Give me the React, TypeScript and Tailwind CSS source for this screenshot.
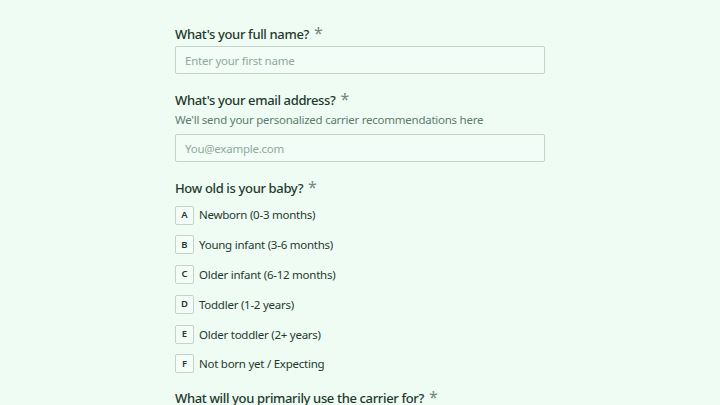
import React from "react";

const Label = ({ children }: { children: React.ReactNode }) => (
  <div className="flex items-start text-[13px] font-medium leading-[20px] tracking-[-0.35px] text-[#1d3a2c]">
    <span>{children}</span>
    <span className="ml-[5px] mt-[1px] text-[16px] font-normal leading-[16px] tracking-normal text-[#6f8a7c]">*</span>
  </div>
);

const options = [
  ["A", "Newborn (0-3 months)"],
  ["B", "Young infant (3-6 months)"],
  ["C", "Older infant (6-12 months)"],
  ["D", "Toddler (1-2 years)"],
  ["E", "Older toddler (2+ years)"],
  ["F", "Not born yet / Expecting"],
];

export default function App() {
  return (
    <div
      className="h-[405px] w-full overflow-hidden bg-[#effcf4]"
      style={{ fontFamily: '"Noto Sans", sans-serif' }}
    >
      <div className="mx-auto flex w-[370px] flex-col pt-[24px]">
        <Label>What's your full name?</Label>
        <input
          className="mt-[2px] h-[28px] w-full rounded-[2px] border border-[#c3d3ca] bg-[#f2fdf7] px-[9px] text-[11.5px] tracking-[-0.25px] text-[#1d3a2c] placeholder-[#8fa99a] outline-none"
          placeholder="Enter your first name"
        />
        <div className="mt-[16px]">
          <Label>What's your email address?</Label>
        </div>
        <div className="mt-[1px] text-[11.5px] leading-[18px] tracking-[-0.25px] text-[#5f7b6c]">
          We'll send your personalized carrier recommendations here
        </div>
        <input
          className="mt-[5px] h-[28px] w-full rounded-[2px] border border-[#c3d3ca] bg-[#f2fdf7] px-[9px] text-[11.5px] tracking-[-0.25px] text-[#1d3a2c] placeholder-[#8fa99a] outline-none"
          placeholder="You@example.com"
        />
        <div className="mt-[16px]">
          <Label>How old is your baby?</Label>
        </div>
        <div className="mt-[8px] flex flex-col gap-[11.8px]">
          {options.map(([k, t]) => (
            <div key={k} className="flex h-[18px] items-center">
              <div className="flex h-[19px] w-[19px] items-center justify-center rounded-[2px] border border-[#c3d3ca] bg-[#f4fdf8] text-[9.5px] font-semibold text-[#1d3a2c]">
                {k}
              </div>
              <span className="ml-[5px] text-[11.5px] tracking-[-0.25px] text-[#1d3a2c]">{t}</span>
            </div>
          ))}
        </div>
        <div className="mt-[15px]">
          <Label>What will you primarily use the carrier for?</Label>
        </div>
      </div>
    </div>
  );
}
